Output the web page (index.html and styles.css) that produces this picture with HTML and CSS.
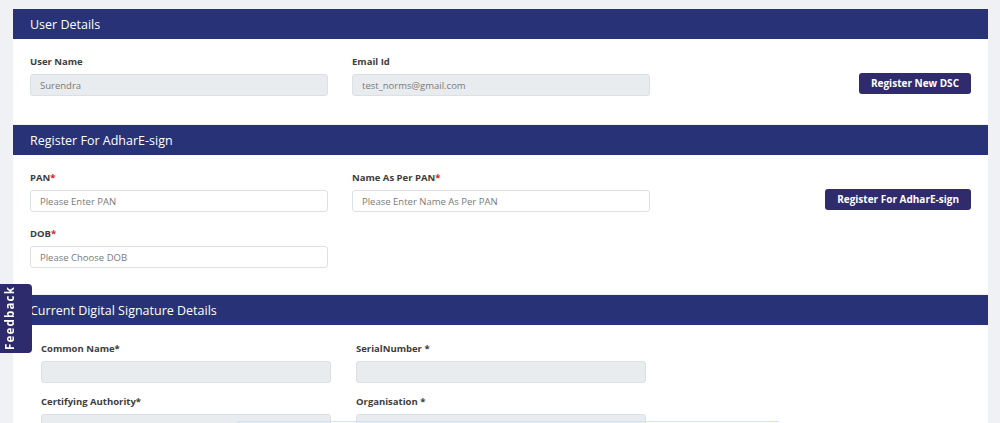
FILE: index.html
```html
<!DOCTYPE html>
<html lang="en">
<head>
<meta charset="utf-8">
<title>Digital Signature</title>
<link rel="stylesheet" href="styles.css">
</head>
<body>
<div class="page">
  <section class="card">
    <div class="card-head">User Details</div>
    <div class="card-body">
      <div class="row">
        <div class="field">
          <label class="lbl">User Name</label>
          <div class="inp ro">Surendra</div>
        </div>
        <div class="field">
          <label class="lbl">Email Id</label>
          <div class="inp ro">test_norms@gmail.com</div>
        </div>
        <div class="act"><button class="btn">Register New DSC</button></div>
      </div>
    </div>
  </section>

  <section class="card">
    <div class="card-head">Register For AdharE-sign</div>
    <div class="card-body">
      <div class="row">
        <div class="field">
          <label class="lbl">PAN<span class="req">*</span></label>
          <div class="inp">Please Enter PAN</div>
        </div>
        <div class="field">
          <label class="lbl">Name As Per PAN<span class="req">*</span></label>
          <div class="inp">Please Enter Name As Per PAN</div>
        </div>
        <div class="act"><button class="btn">Register For AdharE-sign</button></div>
      </div>
      <div class="row row2">
        <div class="field">
          <label class="lbl">DOB<span class="req">*</span></label>
          <div class="inp">Please Choose DOB</div>
        </div>
      </div>
    </div>
  </section>

  <section class="card">
    <div class="card-head">Current Digital Signature Details</div>
    <div class="card-body dsc">
      <div class="grid3">
        <div class="field">
          <label class="lbl">Common Name*</label>
          <div class="inp ro"></div>
        </div>
        <div class="field">
          <label class="lbl">SerialNumber *</label>
          <div class="inp ro"></div>
        </div>
        <div class="field">
          <label class="lbl">Certifying Authority*</label>
          <div class="inp ro"></div>
        </div>
        <div class="field">
          <label class="lbl">Organisation *</label>
          <div class="inp ro"></div>
        </div>
      </div>
    </div>
  </section>
</div>

<div class="feedback"><span>Feedback</span></div>
<div class="bottom-line"></div>
</body>
</html>
```

FILE: styles.css
```css
html, body {
  margin: 0;
  padding: 0;
  overflow: hidden;
}
body {
  background: #f0f1f5;
  font-family: "Open Sans", "Liberation Sans", sans-serif;
  color: #3a3a3a;
}
.page {
  padding: 9px 12px 0 13px;
}
.card {
  background: #fff;
  margin-bottom: 1px;
}
.card-head {
  height: 30px;
  background: #283276;
  color: #fff;
  font-size: 12.5px;
  font-weight: 500;
  display: flex;
  align-items: center;
  padding-left: 17px;
}
.card-body {
  padding: 16px 17px 28px;
}
.row {
  display: grid;
  grid-template-columns: 298px 298px 1fr;
  column-gap: 24px;
}
.row2 {
  margin-top: 15px;
}
.card:nth-child(2) .card-body {
  padding-bottom: 26px;
}
.field {
  display: flex;
  flex-direction: column;
}
.lbl {
  font-size: 9.5px;
  font-weight: 700;
  line-height: 14px;
  height: 14px;
  margin-bottom: 5px;
  color: #3d3d3d;
}
.req {
  color: #e01b24;
}
.inp {
  box-sizing: border-box;
  height: 22px;
  border: 1px solid #dcdfe4;
  border-radius: 3px;
  background: #fff;
  font-size: 9.5px;
  color: #7a7a7a;
  padding-left: 9px;
  display: flex;
  align-items: center;
}
.inp.ro {
  background: #e9ecef;
}
.act {
  justify-self: end;
  align-self: start;
  margin-top: 15px;
}
.btn {
  height: 21px;
  padding: 0 12px;
  border: none;
  border-radius: 3px;
  background: #2f2b6c;
  color: #fff;
  font-family: "Open Sans", "Liberation Sans", sans-serif;
  font-size: 10px;
  font-weight: 700;
  cursor: pointer;
}
.dsc {
  padding: 17px 17px 20px 28px;
}
.grid3 {
  display: grid;
  grid-template-columns: 290px 290px;
  column-gap: 25px;
  row-gap: 12px;
}
.feedback {
  position: fixed;
  left: 0;
  top: 284px;
  width: 32px;
  height: 69px;
  background: #2e2b6c;
  border-radius: 0 4px 4px 0;
  display: flex;
  align-items: center;
  justify-content: flex-start;
}
.feedback span {
  writing-mode: vertical-rl;
  transform: rotate(180deg);
  color: #fff;
  font-size: 11.5px;
  font-weight: 700;
  letter-spacing: 1.2px;
  margin-left: 3px;
  line-height: 14px;
}
.bottom-line {
  position: fixed;
  left: 237px;
  bottom: 1px;
  width: 542px;
  height: 1px;
  background: #cfe2fb;
}
```
